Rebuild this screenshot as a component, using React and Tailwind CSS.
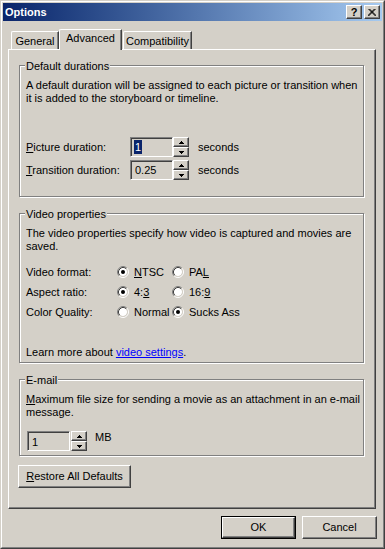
const raised = 'border border-t-white border-l-white border-r-[#404040] border-b-[#404040] shadow-[inset_-1px_-1px_0_#808080]'
const sunken = 'border border-t-[#808080] border-l-[#808080] border-r-white border-b-white shadow-[inset_1px_1px_0_#404040,inset_-1px_-1px_0_#d4d0c8]'

function Group({ title, className = '', children }) {
  return (
    <div className={`relative w-[345px] border border-[#808080] shadow-[inset_1px_1px_0_#fff,1px_1px_0_#fff] pl-[6px] pt-[13px] ${className}`}>
      <span className="absolute -top-[6px] left-[5px] bg-[#d4d0c8] px-[1px] leading-[13px]">{title}</span>
      {children}
    </div>
  )
}

function Arrow({ down }) {
  return (
    <svg width="5" height="3" viewBox="0 0 5 3" className="block">
      {down ? (
        <>
          <rect x="0" y="0" width="5" height="1" fill="#000" />
          <rect x="1" y="1" width="3" height="1" fill="#000" />
          <rect x="2" y="2" width="1" height="1" fill="#000" />
        </>
      ) : (
        <>
          <rect x="2" y="0" width="1" height="1" fill="#000" />
          <rect x="1" y="1" width="3" height="1" fill="#000" />
          <rect x="0" y="2" width="5" height="1" fill="#000" />
        </>
      )}
    </svg>
  )
}

function Spinner() {
  return (
    <div className="flex flex-col w-[16px] h-[20px]">
      <div className={`${raised} h-[10px] flex items-center justify-center`}><Arrow /></div>
      <div className={`${raised} h-[10px] flex items-center justify-center`}><Arrow down /></div>
    </div>
  )
}

function Radio({ checked }) {
  return (
    <svg width="12" height="12" viewBox="0 0 12 12" className="block shrink-0">
      <circle cx="6" cy="6" r="4" fill="#fff" />
      <path d="M2.11 9.89 A5.5 5.5 0 0 1 9.89 2.11" stroke="#808080" fill="none" />
      <path d="M9.89 2.11 A5.5 5.5 0 0 1 2.11 9.89" stroke="#fff" fill="none" />
      <path d="M2.82 9.18 A4.5 4.5 0 0 1 9.18 2.82" stroke="#404040" fill="none" />
      <path d="M9.18 2.82 A4.5 4.5 0 0 1 2.82 9.18" stroke="#d4d0c8" fill="none" />
      {checked && <circle cx="6" cy="6" r="2" fill="#000" />}
    </svg>
  )
}

function Option({ checked, children, className = '' }) {
  return (
    <div className={`flex items-center gap-[5px] ${className}`}>
      <Radio checked={checked} />
      <span>{children}</span>
    </div>
  )
}

export default function App() {
  return (
    <div className="w-[385px] h-[549px] bg-[#d4d0c8] text-black text-[11px] leading-[13px] font-['Liberation_Sans',Arial,sans-serif] border border-t-[#d4d0c8] border-l-[#d4d0c8] border-r-[#404040] border-b-[#404040]">
      <div className="h-full border border-t-white border-l-white border-r-[#808080] border-b-[#808080] p-[1px] flex flex-col">
        {/* Title bar */}
        <div className="h-[18px] bg-gradient-to-r from-[#0a246a] to-[#a6caf0] flex items-center pl-[2px] pr-[2px]">
          <span className="text-white font-bold flex-1">Options</span>
          <div className={`${raised} w-[16px] h-[14px] bg-[#d4d0c8] flex items-center justify-center font-bold text-[11px] leading-[11px]`}>?</div>
          <div className={`${raised} w-[16px] h-[14px] bg-[#d4d0c8] flex items-center justify-center ml-[2px]`}>
            <svg width="8" height="7" viewBox="0 0 8 7">
              <path d="M0.5 0 L7.5 7 M1.5 0 L8.5 7 M7.5 0 L0.5 7 M6.5 0 L-0.5 7" stroke="#000" strokeWidth="1" transform="translate(0 0)" />
            </svg>
          </div>
        </div>

        {/* Tabs */}
        <div className="pt-[8px] pl-[8px] h-[28px] flex items-end">
          <div className="w-[48px] h-[18px] border-t border-l border-t-white border-l-white border-r border-r-[#404040] shadow-[inset_-1px_0_0_#808080] rounded-tl-[2px] flex items-center justify-center pt-[1px]">General</div>
          <div className="relative z-10 w-[63px] h-[21px] -mb-[1px] bg-[#d4d0c8] border-t border-l border-t-white border-l-white border-r border-r-[#404040] shadow-[inset_-1px_0_0_#808080] rounded-tl-[2px] flex items-center justify-center pb-[3px]">Advanced</div>
          <div className="w-[69px] h-[18px] ml-[1px] border-t border-l border-t-white border-l-white border-r border-r-[#404040] shadow-[inset_-1px_0_0_#808080] rounded-tl-[2px] flex items-center justify-center pt-[1px]">Compatibility</div>
        </div>

        {/* Panel */}
        <div className={`ml-[5px] w-[368px] h-[460px] ${raised} pl-[10px] pt-[15px]`}>
          <Group title="Default durations" className="h-[132px]">
            <p>A default duration will be assigned to each picture or transition when<br />it is added to the storyboard or timeline.</p>
            <div className="mt-[32px] flex items-center h-[20px]">
              <span className="w-[104px]"><u>P</u>icture duration:</span>
              <div className={`${sunken} w-[43px] h-[20px] pl-[3px] flex items-center`}>
                <span className="bg-[#0a246a] text-white px-[1px] leading-[14px]">1</span>
              </div>
              <Spinner />
              <span className="ml-[9px]">seconds</span>
            </div>
            <div className="mt-[3px] flex items-center h-[20px]">
              <span className="w-[104px]"><u>T</u>ransition duration:</span>
              <div className={`${sunken} w-[43px] h-[20px] pl-[4px] flex items-center`}>0.25</div>
              <Spinner />
              <span className="ml-[9px]">seconds</span>
            </div>
          </Group>

          <Group title="Video properties" className="h-[150px] mt-[16px]">
            <p>The video properties specify how video is captured and movies are<br />saved.</p>
            <div className="mt-[9px] flex items-center h-[20px]">
              <span className="w-[91px]">Video format:</span>
              <Option checked className="w-[55px]"><u>N</u>TSC</Option>
              <Option>PA<u>L</u></Option>
            </div>
            <div className="flex items-center h-[20px]">
              <span className="w-[91px]">Aspect ratio:</span>
              <Option checked className="w-[55px]">4:<u>3</u></Option>
              <Option>16:<u>9</u></Option>
            </div>
            <div className="flex items-center h-[20px]">
              <span className="w-[91px]">Color Quality:</span>
              <Option className="w-[55px]">Normal</Option>
              <Option checked>Sucks Ass</Option>
            </div>
            <p className="mt-[24px]">Learn more about <span className="text-[#0000ff] underline">video settings</span>.</p>
          </Group>

          <Group title="E-mail" className="h-[77px] mt-[16px]">
            <p><u>M</u>aximum file size for sending a movie as an attachment in an e-mail<br />message.</p>
            <div className="mt-[12px] ml-[1px] flex items-start">
              <div className={`${sunken} w-[43px] h-[20px] pl-[4px] pt-[3px] flex items-center`}>1</div>
              <div className="ml-[1px]"><Spinner /></div>
              <span className="ml-[8px]">MB</span>
            </div>
          </Group>

          <div className={`${raised} -ml-[1px] mt-[9px] w-[113px] h-[23px] flex items-center justify-center`}>
            <span><u>R</u>estore All Defaults</span>
          </div>
        </div>

        {/* Buttons */}
        <div className="mt-[7px] flex justify-end gap-[6px] pr-[5px]">
          <div className="w-[75px] h-[23px] border border-black">
            <div className={`${raised} w-full h-full flex items-center justify-center`}>OK</div>
          </div>
          <div className={`${raised} w-[75px] h-[23px] flex items-center justify-center`}>Cancel</div>
        </div>
      </div>
    </div>
  )
}
